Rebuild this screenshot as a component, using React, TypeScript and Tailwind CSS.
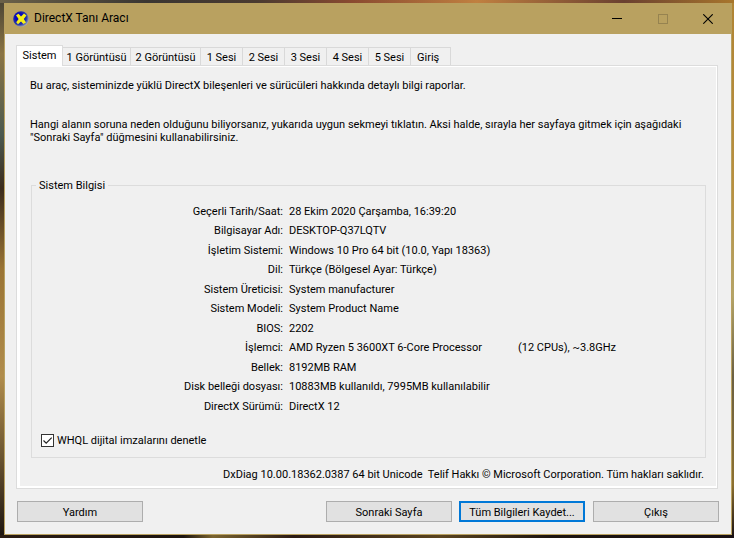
import clsx from "clsx";

const tabs = [
  { label: "1 Görüntüsü", width: "w-[68px]" },
  { label: "2 Görüntüsü", width: "w-[70px]" },
  { label: "1 Sesi", width: "w-[42px]" },
  { label: "2 Sesi", width: "w-[42px]" },
  { label: "3 Sesi", width: "w-[42px]" },
  { label: "4 Sesi", width: "w-[42px]" },
  { label: "5 Sesi", width: "w-[42px]" },
  { label: "Giriş", width: "w-[40px] pl-[6px] text-left" },
];

const info = [
  { label: "Geçerli Tarih/Saat:", value: "28 Ekim 2020 Çarşamba, 16:39:20" },
  { label: "Bilgisayar Adı:", value: "DESKTOP-Q37LQTV" },
  { label: "İşletim Sistemi:", value: "Windows 10 Pro 64 bit (10.0, Yapı 18363)" },
  { label: "Dil:", value: "Türkçe (Bölgesel Ayar: Türkçe)" },
  { label: "Sistem Üreticisi:", value: "System manufacturer" },
  { label: "Sistem Modeli:", value: "System Product Name" },
  { label: "BIOS:", value: "2202" },
  { label: "İşlemci:", value: "AMD Ryzen 5 3600XT 6-Core Processor", extra: "(12 CPUs), ~3.8GHz" },
  { label: "Bellek:", value: "8192MB RAM" },
  { label: "Disk belleği dosyası:", value: "10883MB kullanıldı, 7995MB kullanılabilir" },
  { label: "DirectX Sürümü:", value: "DirectX 12" },
];

// desktop colours that show round the window: top, bottom, left, right
const desktop = clsx(
  "bg-[linear-gradient(to_right,#6b6148,#3a3632_20%,#4a3a30_35%,#8a4a30_48%,#c08040_65%,#6a4030_85%,#a8762c),linear-gradient(to_right,#2a1c14,#1c1410_25%,#7a6430_29%,#2a1a14_40%,#5a4420_60%,#1c1410_75%,#181014),linear-gradient(to_bottom,#4a4434,#8a7444_10%,#4c5a50_25%,#3c2c1c_35%,#9a7434_50%,#b08c4c_70%,#6a5430_85%,#1c1410),linear-gradient(to_bottom,#b08434,#b89040_35%,#b4a468_55%,#6a6044_70%,#8c7030_90%,#181014)]",
  "bg-[position:top,bottom,left,right] bg-[length:100%_3px,100%_3px,50%_100%,50%_100%] bg-no-repeat"
);

function DxIcon() {
  return (
    <svg width="16" height="16" viewBox="0 0 16 16" aria-hidden="true">
      <defs>
        <radialGradient id="ball" cx="0.4" cy="0.4" r="0.65">
          <stop offset="0.4" stopColor="#0808b8" />
          <stop offset="0.7" stopColor="#2838a8" />
          <stop offset="1" stopColor="#b4b8b8" />
        </radialGradient>
      </defs>
      <circle cx="8" cy="8" r="7.8" fill="url(#ball)" />
      <path d="M3 4.2 5.5 2.8 8 5.6 11 2.6 13.4 4.4 10.8 8 13 11.4 10.4 13 8 10.6 5 13.2 3.2 11.2 5.6 8Z" fill="#f6ee18" />
    </svg>
  );
}

function Button({ label, primary }: { label: string; primary?: boolean }) {
  return (
    <button
      className={clsx(
        "h-[21px] w-[126px] bg-[#e1e1e1] pt-px text-center",
        primary ? "border-2 border-[#0078d7]" : "border border-[#adadad]"
      )}
    >
      {label}
    </button>
  );
}

export default function App() {
  return (
    <div className={clsx("min-h-screen pt-[3px] pr-[2px] pb-[3px] pl-1 font-[Roboto,'Liberation_Sans',sans-serif] text-[11px] leading-[13px] text-black", desktop)}>
      <div className="border-x border-b border-[#b9a160] bg-[#f0f0f0]">
        <header className="flex h-[31px] items-center bg-[#b9a160] pl-2 text-[12px]">
          <DxIcon />
          <h1 className="ml-[5px] flex-1">DirectX Tanı Aracı</h1>
          <button className="flex h-full w-[46px] items-center justify-center" aria-label="Simge durumuna küçült">
            <svg width="10" height="10" shapeRendering="crispEdges"><path d="M0 4.5H10" stroke="#000" /></svg>
          </button>
          <button className="flex h-full w-[45px] items-center justify-center" aria-label="Ekranı kapla" disabled>
            <svg width="10" height="10" shapeRendering="crispEdges"><path d="M.5 .5H9.5V9.5H.5Z" stroke="#968350" fill="none" /></svg>
          </button>
          <button className="flex h-full w-[46px] items-center justify-center" aria-label="Kapat">
            <svg width="10" height="10"><path d="M.3 .3 9.7 9.7M9.7 .3 .3 9.7" stroke="#000" strokeWidth="1.1" /></svg>
          </button>
        </header>

        <main className="pt-[11px] pr-[13px] pl-[11px]">
          <nav className="flex items-end" role="tablist">
            <button role="tab" aria-selected="true" className="relative z-10 -mb-px h-[21px] w-[47px] border border-b-0 border-[#dcdcdc] bg-white pb-[2px]">
              Sistem
            </button>
            {tabs.map((tab) => (
              <button
                key={tab.label}
                role="tab"
                aria-selected="false"
                className={clsx("h-[18px] border-t border-r border-[#d9d9d9] pt-[2px] whitespace-nowrap", tab.width)}
              >
                {tab.label}
              </button>
            ))}
          </nav>

          <section className="border border-[#dcdcdc]">
            <div className="border-t border-r border-b-2 border-l-[3px] border-white px-[10px] pt-3 pb-[5px]">
              <p>Bu araç, sisteminizde yüklü DirectX bileşenleri ve sürücüleri hakkında detaylı bilgi raporlar.</p>
              <p className="mt-[26px]">
                Hangi alanın soruna neden olduğunu biliyorsanız, yukarıda uygun sekmeyi tıklatın. Aksi halde, sırayla her sayfaya gitmek için aşağıdaki "Sonraki Sayfa" düğmesini kullanabilirsiniz.
              </p>

              <fieldset className="mt-[35px] ml-px border border-[#dcdcdc] px-[9px] pb-[10px]">
                <legend className="-ml-[5px] px-[3px]">Sistem Bilgisi</legend>
                <dl className="mt-[13px]">
                  {info.map((row) => (
                    <div key={row.label} className="flex odd:h-[19px] even:h-5">
                      <dt className="w-[242px] text-right">{row.label}</dt>
                      <dd className="ml-[6px] flex flex-1">
                        <span className={clsx(row.extra && "w-[229px]")}>{row.value}</span>
                        {row.extra && <span>{row.extra}</span>}
                      </dd>
                    </div>
                  ))}
                </dl>
                <label className="mt-[15px] flex items-center gap-[3px]">
                  <span className="grid">
                    <input type="checkbox" defaultChecked className="peer col-start-1 row-start-1 size-[13px] appearance-none border border-[#333] bg-white" />
                    <svg className="pointer-events-none invisible col-start-1 row-start-1 peer-checked:visible" width="13" height="13" fill="none" stroke="#222" strokeWidth="1.2">
                      <path d="M2.5 6.5 5.2 9.2 10.7 3.7" />
                    </svg>
                  </span>
                  WHQL dijital imzalarını denetle
                </label>
              </fieldset>

              <p className="mt-[10px] pr-[2px] text-right whitespace-pre">DxDiag 10.00.18362.0387 64 bit Unicode  Telif Hakkı © Microsoft Corporation. Tüm hakları saklıdır.</p>
            </div>
          </section>
        </main>

        <footer className="flex gap-2 px-3 pt-3 pb-3">
          <Button label="Yardım" />
          <div className="ml-auto flex gap-[7px]">
            <Button label="Sonraki Sayfa" />
            <Button label="Tüm Bilgileri Kaydet..." primary />
          </div>
          <Button label="Çıkış" />
        </footer>
      </div>
    </div>
  );
}
